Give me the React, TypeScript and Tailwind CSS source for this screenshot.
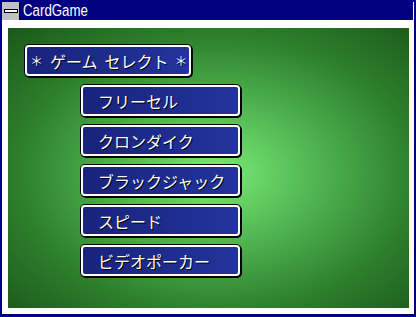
import React from "react";

const items = ["フリーセル", "クロンダイク", "ブラックジャック", "スピード", "ビデオポーカー"];

function Box({ w, children, pl }: { w: string; children: React.ReactNode; pl: string }) {
  return (
    <div
      className={`${w} ${pl} h-[31px] flex items-center rounded-[4px] border-2 border-white bg-gradient-to-r from-[#18237c] to-[#22349c] shadow-[0_0_0_1px_#000,1px_1px_0_1px_#000] text-white text-[16px] leading-none [text-shadow:1px_1px_0_#000] [font-family:'Noto_Sans_CJK_JP',sans-serif]`}
    >
      {children}
    </div>
  );
}

export default function App() {
  return (
    <div className="w-[416px] h-[317px] bg-[#000080] pt-[2px] pl-[2px] pr-[2px] pb-[3px] flex flex-col">
      <div className="flex flex-col flex-1 bg-white pr-px">
        <div className="flex h-[18px] bg-[#000080]">
          <div className="w-[18px] h-[18px] bg-[#c0c0c0] border-r border-black flex items-center justify-center">
            <div className="w-[14px] h-[4px] bg-white border border-black" />
          </div>
          <div className="pl-[3px] text-white text-[16px] leading-[18px] [font-family:'Liberation_Sans',sans-serif]">
            <span className="inline-block origin-left scale-x-[0.83]">CardGame</span>
          </div>
        </div>
        <div className="flex-1 pt-[8px] pl-[6px] pr-[4px] pb-[6px] flex">
          <div className="flex-1 bg-[radial-gradient(ellipse_at_52%_52%,#78ec78_0%,#4cae4c_38%,#2c7e2c_68%,#1b581b_100%)] pt-[17px] pl-[17px] flex flex-col">
            <Box w="w-[166px]" pl="pl-[3px]">
              <span className="inline-block w-[13px] text-[13px]">＊</span>
              <span className="ml-[7px]">ゲーム</span>
              <span className="ml-[7px]">セレクト</span>
              <span className="ml-[6px] text-[13px]">＊</span>
            </Box>
            <div className="ml-[56px] mt-[9px] flex flex-col gap-[9px]">
              {items.map((t) => (
                <Box key={t} w="w-[159px]" pl="pl-[15px]">
                  {t}
                </Box>
              ))}
            </div>
          </div>
        </div>
      </div>
    </div>
  );
}
